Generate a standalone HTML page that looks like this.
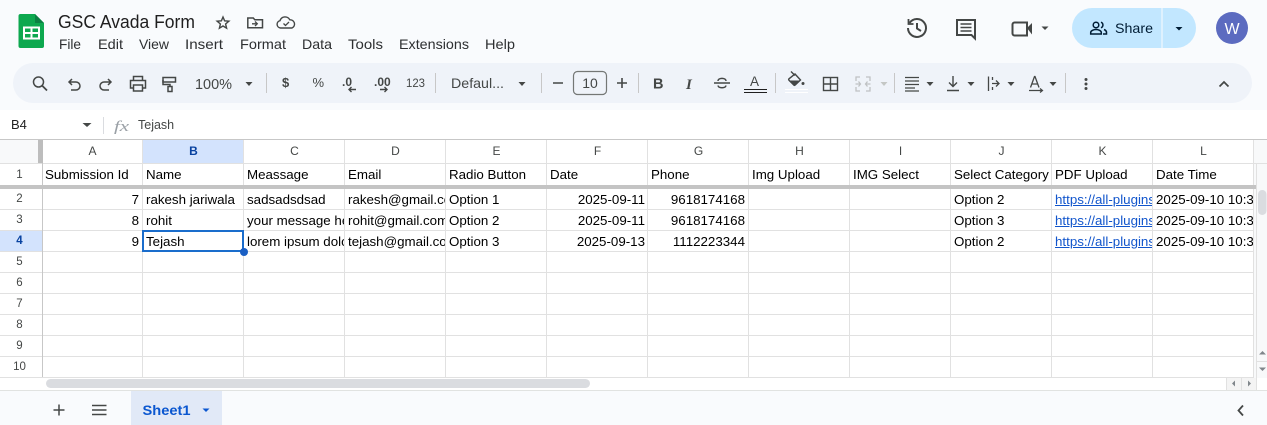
<!DOCTYPE html>
<html><head><meta charset="utf-8">
<style>
html,body{margin:0;padding:0;width:1267px;height:425px;overflow:hidden;background:#f9fbfd;font-family:"Liberation Sans",Arial,sans-serif}
#bg{position:absolute;left:0;top:0}
.c{position:absolute;height:20px;line-height:21px;font-size:13.33px;color:#000;overflow:hidden;white-space:nowrap}
.r{text-align:right}
.l{color:#1155cc;text-decoration:underline}
text{font-family:"Liberation Sans",Arial,sans-serif}
</style></head><body>
<svg id="bg" width="1267" height="425" viewBox="0 0 1267 425" xmlns="http://www.w3.org/2000/svg">
<rect width="1267" height="425" fill="#f9fbfd"/>
<!-- logo -->
<path d="M20.500 14H35L44 23V46A2 2 0 0 1 42 48H20.500A2 2 0 0 1 18.500 46V16A2 2 0 0 1 20.500 14Z" fill="#0da84f"/>
<path d="M35 14L44 23H35Z" fill="#0b8043"/>
<path d="M24 27.500H39V38.500H24Z" fill="none" stroke="#fff" stroke-width="2"/>
<path d="M24 33H39M31.500 27.500V38.500" stroke="#fff" stroke-width="2"/>
<!-- title -->
<text x="58" y="28" font-size="18" fill="#1f1f1f" textLength="137" lengthAdjust="spacingAndGlyphs">GSC Avada Form</text>
<path d="M223 17l1.600 3.800 4.300.4-3.300 2.800 1 4.200-3.600-2.200-3.600 2.200 1-4.200-3.300-2.800 4.300-.4z" fill="none" stroke="#444746" stroke-width="1.400"/>
<path d="M247.800 18h5.500l1.500 1.800h7.700v8H247.800z" fill="none" stroke="#444746" stroke-width="1.500"/>
<path d="M252 23.800h5M255 21.500l2.300 2.300-2.300 2.300" fill="none" stroke="#444746" stroke-width="1.300"/>
<path d="M283 28h-2.500a3.700 3.700 0 0 1-.5-7.300 5.300 5.300 0 0 1 9.800-.9 4.300 4.300 0 0 1 2.200 8.200z" fill="none" stroke="#444746" stroke-width="1.400"/>
<path d="M283.500 23.500l2 2 3.500-3.500" fill="none" stroke="#444746" stroke-width="1.300"/>
<!-- menu -->
<g font-size="14" fill="#2d2f31">
<text x="59" y="49" textLength="22" lengthAdjust="spacingAndGlyphs">File</text>
<text x="98" y="49" textLength="25" lengthAdjust="spacingAndGlyphs">Edit</text>
<text x="139" y="49" textLength="30" lengthAdjust="spacingAndGlyphs">View</text>
<text x="185" y="49" textLength="38" lengthAdjust="spacingAndGlyphs">Insert</text>
<text x="240" y="49" textLength="46" lengthAdjust="spacingAndGlyphs">Format</text>
<text x="302" y="49" textLength="30" lengthAdjust="spacingAndGlyphs">Data</text>
<text x="348" y="49" textLength="35" lengthAdjust="spacingAndGlyphs">Tools</text>
<text x="399" y="49" textLength="70" lengthAdjust="spacingAndGlyphs">Extensions</text>
<text x="485" y="49" textLength="30" lengthAdjust="spacingAndGlyphs">Help</text>
</g>
<!-- right header -->
<g fill="none" stroke="#444746" stroke-width="2">
<path d="M909.500 23a9 9 0 1 1-1.500 5"/>
<path d="M908.500 19v5h5" stroke-width="1.800"/>
<path d="M917 23v5.500l4 2.500"/>
<path d="M957 20h18v18.500l-3.500-3.500H957z"/>
<path d="M960.500 24h11M960.500 27.500h11M960.500 31h11" stroke-width="1.600"/>
<path d="M1014.500 22.500h12.500v13h-12.500a2 2 0 0 1-2-2v-9a2 2 0 0 1 2-2z"/>
</g>
<path d="M1027 28l5-5v11.500z" fill="#444746"/>
<path d="M1041.500 26.500h7l-3.500 3.500z" fill="#444746"/>
<!-- share -->
<path d="M1092 8h69.500v40H1092a20 20 0 0 1 0-40z" fill="#c2e7ff"/>
<path d="M1162.500 8H1176a20 20 0 0 1 0 40h-13.500z" fill="#c2e7ff"/>
<g fill="none" stroke="#001d35" stroke-width="1.500">
<circle cx="1096" cy="25" r="2.800"/>
<path d="M1090.700 34v-1.500c0-1.800 3-3 5.300-3s5.300 1.200 5.300 3V34z"/>
<path d="M1101 22.200a3 3 0 0 1 0 5.600M1104 29.500c1.500.6 2.500 1.500 2.500 3V34H1103"/>
</g>
<text x="1115" y="33" font-size="14" fill="#001d35" textLength="38" lengthAdjust="spacingAndGlyphs">Share</text>
<path d="M1175.500 27h7l-3.500 3.500z" fill="#001d35"/>
<circle cx="1232" cy="28" r="16" fill="#5c6bc0"/>
<text x="1232" y="34" font-size="16" fill="#fff" text-anchor="middle">W</text>
<!-- toolbar -->
<rect x="13" y="63" width="1239" height="40" rx="20" fill="#eff3f9"/>
<g fill="none" stroke="#444746" stroke-width="1.500">
<circle cx="38.500" cy="82" r="5"/><path d="M42 85.500l5 5" stroke-width="1.800"/>
<path d="M72 79l-3 3 3 3M69 82h7a4 4 0 0 1 0 8h-5"/>
<path d="M108 79l3 3-3 3M111 82h-7a4 4 0 0 0 0 8h5"/>
<path d="M133.500 80v-3.500h9V80M133.500 88h-3V80.500h15V88h-3M133.500 85h9v6h-9z"/>
<rect x="163" y="77.500" width="12.500" height="4.500"/>
<path d="M163 80v4.500h7v2"/>
<rect x="168" y="86.500" width="4" height="5"/>
</g>
<text x="195" y="89" font-size="14.500" fill="#444746" textLength="37" lengthAdjust="spacingAndGlyphs">100%</text>
<g fill="#444746">
<path d="M245.500 82h7l-3.500 4z"/>
<path d="M518.500 82h7l-3.500 4z"/>
<path d="M926.500 82h7l-3.500 4z"/><path d="M967.500 82h7l-3.500 4z"/><path d="M1007.500 82h7l-3.500 4z"/><path d="M1049.500 82h7l-3.500 4z"/>
<path d="M880.500 82h7l-3.500 4z" fill="#c4c7c5"/>
</g>
<g stroke="#c7c7c7" stroke-width="1">
<path d="M266.500 73v20M435.500 73v20M541.500 73v20M638.500 73v20M775.500 73v20M894.500 73v20M1065.500 73v20"/>
</g>
<g fill="#444746" font-size="13">
<text x="282" y="87" font-weight="bold" font-size="13">$</text>
<text x="312.500" y="87">%</text>
<text x="342" y="86" font-weight="bold" font-size="12">.0</text>
<text x="374" y="86" font-weight="bold" font-size="12">.00</text>
<text x="406" y="87" font-size="12" textLength="19" lengthAdjust="spacingAndGlyphs">123</text>
<text x="451" y="88" font-size="14" textLength="53" lengthAdjust="spacingAndGlyphs">Defaul...</text>
<text x="653" y="88.500" font-size="14.500" font-weight="bold">B</text>
<text x="686" y="89" font-size="15" font-style="italic" font-weight="bold" style="font-family:'Liberation Serif',serif">I</text>
<text x="750" y="86" font-size="13.500">A</text>
<text x="590" y="88" font-size="14" text-anchor="middle">10</text>
</g>
<g fill="none" stroke="#444746" stroke-width="1.400">
<path d="M349 89.500h7M351.500 87l-2.500 2.500 2.500 2.500M380 89.500h7M384.500 87l2.500 2.500-2.500 2.500"/>
<rect x="573.500" y="71.500" width="33" height="23" rx="4" stroke="#747775" stroke-width="1.200"/>
<path d="M553 83h10M617 83h10M622 78v10" stroke-width="1.600"/>
<path d="M714 83h16M718 81c0-3.500 8-3.500 8 0M718 85.500c.5 3 7.500 3 8 0"/>
<path d="M744 89.500h23M744 92.500h23" stroke="#1f1f1f" stroke-width="1"/>
<rect x="823.500" y="77.500" width="14" height="13"/><path d="M830.500 77.500v13M823.500 84h14"/>
<path d="M791 71.500l4 4M795 74l5.500 6-5.300 5a1 1 0 0 1-1.400 0l-4.800-4.800a1 1 0 0 1 0-1.400z"/>
</g>
<path d="M788.500 80.500h11.500l-4.800 4.500a1 1 0 0 1-1.400 0z" fill="#444746"/>
<circle cx="803" cy="83.500" r="1.500" fill="#444746"/>
<path d="M785 89.500h23M785 92.500h23" stroke="#fff" stroke-width="1"/>
<g fill="none" stroke="#bfc2c4" stroke-width="1.300">
<path d="M856 81v-4h4M866 77h4v4M856 87v4h4M866 91h4v-4M855.500 84h5M858.500 81.500l2 2.500-2 2.500M870.500 84h-5M867.500 81.500l-2 2.500 2 2.500"/>
</g>
<g fill="none" stroke="#444746" stroke-width="1.400">
<path d="M905 77.500h14M905 81h14M905 84.500h14M905 88h10M905 91h14" stroke-width="1.200"/>
<path d="M953 76v10.500M949 82.500l4 4 4-4M947 90.500h12"/>
<path d="M988.500 76.500v14.500M992 83.500h7M996 80.500l3 3-3 3M992.500 77v3M992.500 87v3" stroke-width="1.300"/>
<path d="M1029 90.500h13M1040 88.500l2.500 2-2.500 2" stroke-width="1.200"/>
<path d="M1030.500 87.500l4-11h.500l4 11M1032 84h6" stroke-width="1.300"/>
<path d="M1219.500 86.500l4.500-4.500 4.500 4.500" stroke-width="1.700"/>
</g>
<circle cx="1086" cy="79.500" r="1.500" fill="#444746"/><circle cx="1086" cy="84" r="1.500" fill="#444746"/><circle cx="1086" cy="88.500" r="1.500" fill="#444746"/>
<!-- formula bar -->
<rect x="0" y="110" width="1267" height="29" fill="#fff"/>
<text x="11" y="129" font-size="13" fill="#1f1f1f">B4</text>
<path d="M82.500 123h9l-4.500 4z" fill="#444746"/>
<path d="M103.500 117v17" stroke="#dadce0"/>
<text x="114" y="131" font-size="15" font-style="italic" font-family="Liberation Serif" fill="#9aa0a6" textLength="15" lengthAdjust="spacingAndGlyphs" style="font-family:'Liberation Serif',serif">fx</text>
<text x="138" y="129" font-size="12.500" fill="#444746">Tejash</text>
<!-- grid -->
<rect x="0" y="139" width="1267" height="252" fill="#fff"/>
<rect x="0" y="140" width="42" height="23" fill="#f8f9fa"/>
<rect x="1254" y="140" width="13" height="238" fill="#f8f9fa"/>
<rect x="143" y="140" width="100" height="23" fill="#d3e3fd"/>
<rect x="0" y="231" width="42" height="20" fill="#d3e3fd"/>
<g stroke="#e1e1e1" stroke-width="1">
<path d="M0 163.500H1254M0 209.500H1254M0 230.500H1254M0 251.500H1254M0 272.500H1254M0 293.500H1254M0 314.500H1254M0 335.500H1254M0 356.500H1254M0 377.500H1254"/>
<path d="M142.500 140V377M243.500 140V377M344.500 140V377M445.500 140V377M546.500 140V377M647.500 140V377M748.500 140V377M849.500 140V377M950.500 140V377M1051.500 140V377M1152.500 140V377M1253.500 140V390M1256.500 163V378"/>
</g>
<path d="M0 139.500H1267" stroke="#c7c7c7"/>
<path d="M42.500 140V377" stroke="#c7c7c7"/>
<rect x="38" y="140" width="5" height="23" fill="#bdbdbd"/>
<rect x="0" y="185" width="1256" height="4" fill="#c4c4c4"/>
<path d="M1254 163.500H1267" stroke="#e1e1e1"/>
<rect x="1258" y="190" width="8.500" height="25" rx="4.200" fill="#dadce0"/>
<g font-size="12">
<text x="92.500" y="155" text-anchor="middle" fill="#444746">A</text>
<text x="193.500" y="155" text-anchor="middle" font-weight="bold" fill="#0842a0">B</text>
<text x="294.500" y="155" text-anchor="middle" fill="#444746">C</text>
<text x="395.500" y="155" text-anchor="middle" fill="#444746">D</text>
<text x="496.500" y="155" text-anchor="middle" fill="#444746">E</text>
<text x="597.500" y="155" text-anchor="middle" fill="#444746">F</text>
<text x="698.500" y="155" text-anchor="middle" fill="#444746">G</text>
<text x="799.500" y="155" text-anchor="middle" fill="#444746">H</text>
<text x="900.500" y="155" text-anchor="middle" fill="#444746">I</text>
<text x="1001.500" y="155" text-anchor="middle" fill="#444746">J</text>
<text x="1102.500" y="155" text-anchor="middle" fill="#444746">K</text>
<text x="1203.500" y="155" text-anchor="middle" fill="#444746">L</text>
</g>
<g font-size="11.500" fill="#444746" text-anchor="middle">
<text x="19.500" y="178">1</text>
<text x="19.500" y="202">2</text>
<text x="19.500" y="223">3</text>
<text x="19.500" y="244" font-weight="bold" fill="#0842a0">4</text>
<text x="19.500" y="265">5</text>
<text x="19.500" y="286">6</text>
<text x="19.500" y="307">7</text>
<text x="19.500" y="328">8</text>
<text x="19.500" y="349">9</text>
<text x="19.500" y="370">10</text>
</g>
<!-- horizontal scrollbar -->
<rect x="46" y="379" width="544" height="9" rx="4.500" fill="#dadce0"/>
<rect x="1226" y="378" width="31" height="12" fill="#f4f4f4"/>
<path d="M1241.500 378v12M1226.500 378v12M1256.500 378v12" stroke="#e1e1e1"/>
<path d="M1235 380.500v6l-3-3zM1248 380.500v6l3 3-3 0z" fill="#80868b" style="display:none"/>
<path d="M1235 380.500v6l-3-3z" fill="#80868b"/>
<path d="M1248 380.500v6l3-3z" fill="#80868b"/>
<path d="M1259 354.500h7l-3.500-3.500zM1259 367.500h7l-3.500 3.500z" fill="#80868b"/>
<path d="M1257 361.500H1267" stroke="#e1e1e1"/>
<!-- bottom -->
<path d="M0 390.500H1267" stroke="#e1e3e1"/>
<rect x="0" y="391" width="1267" height="34" fill="#f9fbfd"/>
<path d="M53.500 410h11M59 404.500v11M92 405.500h14.500M92 410h14.500M92 414.500h14.500" stroke="#444746" stroke-width="1.500" fill="none"/>
<rect x="131" y="391" width="91" height="34" fill="#e1e9f7"/>
<text x="142.500" y="415" font-size="14" font-weight="bold" fill="#0b57d0" textLength="48" lengthAdjust="spacingAndGlyphs">Sheet1</text>
<path d="M202.500 408.500h7l-3.500 3.500z" fill="#0b57d0"/>
<path d="M1243 405.500l-4.500 5 4.500 5" fill="none" stroke="#444746" stroke-width="1.800"/>
</svg>

<div class="c" style="left:45px;top:164px;width:97px">Submission Id</div>
<div class="c" style="left:146px;top:164px;width:97px">Name</div>
<div class="c" style="left:247px;top:164px;width:97px">Meassage</div>
<div class="c" style="left:348px;top:164px;width:97px">Email</div>
<div class="c" style="left:449px;top:164px;width:97px">Radio Button</div>
<div class="c" style="left:550px;top:164px;width:97px">Date</div>
<div class="c" style="left:651px;top:164px;width:97px">Phone</div>
<div class="c" style="left:752px;top:164px;width:97px">Img Upload</div>
<div class="c" style="left:853px;top:164px;width:97px">IMG Select</div>
<div class="c" style="left:954px;top:164px;width:97px">Select Category</div>
<div class="c" style="left:1055px;top:164px;width:97px">PDF Upload</div>
<div class="c" style="left:1156px;top:164px;width:97px">Date Time</div>

<div class="c r" style="left:43px;top:189px;width:96px">7</div>
<div class="c" style="left:146px;top:189px;width:97px">rakesh jariwala</div>
<div class="c" style="left:247px;top:189px;width:97px">sadsadsdsad</div>
<div class="c" style="left:348px;top:189px;width:97px">rakesh@gmail.com</div>
<div class="c" style="left:449px;top:189px;width:97px">Option 1</div>
<div class="c r" style="left:548px;top:189px;width:97px">2025-09-11</div>
<div class="c r" style="left:648px;top:189px;width:97px">9618174168</div>
<div class="c" style="left:954px;top:189px;width:97px">Option 2</div>
<div class="c l" style="left:1055px;top:189px;width:97px">https://all-plugins.com</div>
<div class="c" style="left:1156px;top:189px;width:97px">2025-09-10 10:30</div>

<div class="c r" style="left:43px;top:210px;width:96px">8</div>
<div class="c" style="left:146px;top:210px;width:97px">rohit</div>
<div class="c" style="left:247px;top:210px;width:97px">your message here</div>
<div class="c" style="left:348px;top:210px;width:97px">rohit@gmail.com</div>
<div class="c" style="left:449px;top:210px;width:97px">Option 2</div>
<div class="c r" style="left:548px;top:210px;width:97px">2025-09-11</div>
<div class="c r" style="left:648px;top:210px;width:97px">9618174168</div>
<div class="c" style="left:954px;top:210px;width:97px">Option 3</div>
<div class="c l" style="left:1055px;top:210px;width:97px">https://all-plugins.com</div>
<div class="c" style="left:1156px;top:210px;width:97px">2025-09-10 10:30</div>

<div class="c r" style="left:43px;top:231px;width:96px">9</div>
<div class="c" style="left:146px;top:231px;width:97px">Tejash</div>
<div class="c" style="left:247px;top:231px;width:97px">lorem ipsum dolor</div>
<div class="c" style="left:348px;top:231px;width:97px">tejash@gmail.com</div>
<div class="c" style="left:449px;top:231px;width:97px">Option 3</div>
<div class="c r" style="left:548px;top:231px;width:97px">2025-09-13</div>
<div class="c r" style="left:648px;top:231px;width:97px">1112223344</div>
<div class="c" style="left:954px;top:231px;width:97px">Option 2</div>
<div class="c l" style="left:1055px;top:231px;width:97px">https://all-plugins.com</div>
<div class="c" style="left:1156px;top:231px;width:97px">2025-09-10 10:30</div>

<div style="position:absolute;left:142px;top:230px;width:98px;height:18px;border:2px solid #1a6dcc"></div>
<div style="position:absolute;left:240px;top:248px;width:8px;height:8px;border-radius:50%;background:#1a5fc4"></div>
</body></html>
